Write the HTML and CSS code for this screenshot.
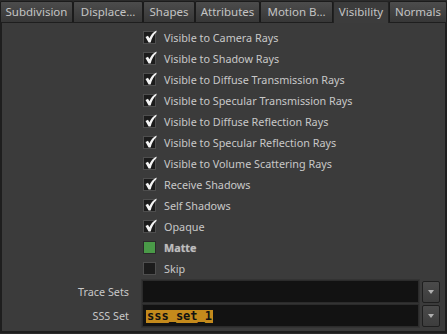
FILE: index.html
```html
<!DOCTYPE html>
<html lang="en">
<head>
  <meta charset="UTF-8">
  <title>Visibility</title>
  <link rel="stylesheet" href="styles.css">
</head>
<body>
  <div class="tabs">
    <div class="tab w-sub">Subdivision</div>
    <div class="tab w-dis">Displace…</div>
    <div class="tab w-sha">Shapes</div>
    <div class="tab w-att">Attributes</div>
    <div class="tab w-mot">Motion B…</div>
    <div class="tab w-vis active">Visibility</div>
    <div class="tab w-nor">Normals</div>
  </div>

  <div class="panel">
    <div class="checks">
      <div class="check"><span class="box on"></span>Visible to Camera Rays</div>
      <div class="check"><span class="box on"></span>Visible to Shadow Rays</div>
      <div class="check"><span class="box on"></span>Visible to Diffuse Transmission Rays</div>
      <div class="check"><span class="box on"></span>Visible to Specular Transmission Rays</div>
      <div class="check"><span class="box on"></span>Visible to Diffuse Reflection Rays</div>
      <div class="check"><span class="box on"></span>Visible to Specular Reflection Rays</div>
      <div class="check"><span class="box on"></span>Visible to Volume Scattering Rays</div>
      <div class="check"><span class="box on"></span>Receive Shadows</div>
      <div class="check"><span class="box on"></span>Self Shadows</div>
      <div class="check"><span class="box on"></span>Opaque</div>
      <div class="check matte"><span class="box green"></span>Matte</div>
      <div class="check"><span class="box"></span>Skip</div>
    </div>

    <div class="row">
      <label>Trace Sets</label>
      <div class="field"></div>
      <div class="drop"></div>
    </div>
    <div class="row">
      <label>SSS Set</label>
      <div class="field"><span class="sel">sss_set_1</span></div>
      <div class="drop"></div>
    </div>
  </div>
</body>
</html>
```

FILE: styles.css
```css
body {
  margin: 0;
  background: #2b2b2b;
  color: #c8c8c8;
  font-family: "Noto Sans", sans-serif;
  font-size: 10.8px;
  width: 447px;
  height: 334px;
  overflow: hidden;
}

/* tab strip */
.tabs {
  display: flex;
  height: 22px;
  padding-top: 1px;
  box-sizing: border-box;
}

.tab {
  box-sizing: border-box;
  height: 21px;
  line-height: 19px;
  text-align: center;
  color: #c4c4c4;
  font-size: 11.5px;
  background: linear-gradient(#4c4c4c, #373737);
  border: 1px solid #1b1b1b;
  border-bottom: none;
  border-radius: 2px 2px 0 0;
}

.tab.active {
  background: #3c3c3c;
  height: 22px;
  border-color: #222;
}

.w-sub { width: 73px; }
.w-dis { width: 70px; }
.w-sha { width: 52px; }
.w-att { width: 65px; }
.w-mot { width: 73px; }
.w-vis { width: 56px; }
.w-nor { width: 58px; }

/* panel */
.panel {
  height: 311px;
  box-sizing: border-box;
  background: #3b3b3b;
  border: 1px solid #1e1e1e;
  border-width: 1px 2px 2px 2px;
  padding-top: 4px;
}

.checks {
  padding-left: 141px;
}

.check {
  display: flex;
  align-items: center;
  height: 21px;
  gap: 8px;
}

.box {
  width: 11px;
  height: 11px;
  background: #1c1c1c;
  border: 1px solid #4e4e4e;
  position: relative;
}

.box.on::after {
  content: "";
  position: absolute;
  left: 1px;
  top: -2px;
  width: 12px;
  height: 13px;
  background: url("data:image/svg+xml,%3Csvg xmlns='http://www.w3.org/2000/svg' viewBox='0 0 12 13'%3E%3Cpath d='M0.5 7 L3 5.8 L4.4 8.3 C5.8 5 8 2 11.5 0.5 L11.5 2 C8.8 4.2 6.8 8 5.6 12.5 L3.6 12.5 Z' fill='%23f4f4f4'/%3E%3C/svg%3E") no-repeat;
}

.box.green {
  background: #4a9a48;
  border-color: #2a2a2a;
}

.matte {
  font-weight: bold;
  color: #bdbdbd;
  text-shadow: 0 0 1px #888;
}

/* set rows */
.row {
  display: flex;
  align-items: center;
  margin-top: 1px;
}

.row label {
  width: 127px;
  text-align: right;
  padding-right: 13px;
  box-sizing: content-box;
}

.field {
  width: 277px;
  height: 23px;
  background: #121212;
  border: 1px solid #2b2b2b;
  outline: 1px solid #333;
  display: flex;
  align-items: center;
  padding-left: 3px;
  box-sizing: border-box;
}

.sel {
  display: inline-block;
  background: #c48a1c;
  color: #111;
  font-family: "DejaVu Sans Mono", monospace;
  font-weight: bold;
  font-size: 12px;
  line-height: 12px;
  height: 13px;
  padding: 0 1px;
  margin-top: 1px;
}

.drop {
  width: 16px;
  height: 20px;
  margin-left: 3px;
  background: linear-gradient(#4a4a4a, #3d3d3d);
  border: 1px solid #1f1f1f;
  border-radius: 2px;
  position: relative;
}

.drop::after {
  content: "";
  position: absolute;
  left: 5px;
  top: 8px;
  border: 3px solid transparent;
  border-top: 4px solid #b0b0b0;
}
```
